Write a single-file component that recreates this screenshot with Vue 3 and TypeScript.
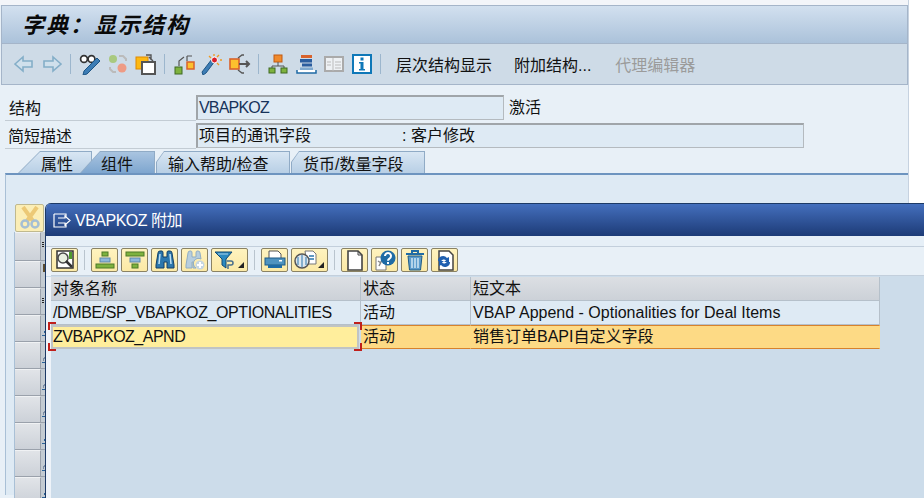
<template>
  <div class="screen">
    <div class="window">
      <div class="titlebar"><span class="title">字典：显示结构</span></div>

      <div class="toolbar">
        <span class="tool">
          <svg width="20" height="18" viewBox="0 0 20 18"><path d="M1 9 9 2v4h9v6H9v4z" fill="#cfe0ec" stroke="#84aec8" stroke-width="1.6"/></svg>
        </span>
        <span class="tool">
          <svg width="20" height="18" viewBox="0 0 20 18"><path d="M19 9 11 2v4H2v6h9v4z" fill="#cfe0ec" stroke="#84aec8" stroke-width="1.6"/></svg>
        </span>
        <i class="sep"></i>
        <span class="tool">
          <svg width="22" height="22" viewBox="0 0 22 22"><circle cx="5" cy="6" r="3.4" fill="#fff" stroke="#333" stroke-width="1.700"/><circle cx="12.500" cy="6" r="3.4" fill="#fff" stroke="#333" stroke-width="1.700"/><path d="M8 5h1.500" stroke="#333" stroke-width="1.700"/><path d="M21 8 8 21l-4 1 1-4L18 5z" fill="#3d7db5" stroke="#1d5585"/></svg>
        </span>
        <span class="tool">
          <svg width="22" height="22" viewBox="0 0 22 22"><circle cx="6" cy="6" r="4" fill="#a9c97f"/><circle cx="15" cy="15" r="4.5" fill="#ee9b85"/><path d="M12 3h4l3 3v2M9 19H6l-3-3v-2" fill="none" stroke="#bbb" stroke-width="2"/></svg>
        </span>
        <span class="tool">
          <svg width="22" height="22" viewBox="0 0 22 22"><rect x="1" y="4" width="12" height="12" fill="#fdb913" stroke="#e08a00"/><rect x="7" y="9" width="13" height="12" fill="#fff" stroke="#555" stroke-width="2"/><path d="M11 2h5v5M14 4l4 4" fill="none" stroke="#555" stroke-width="1.4"/></svg>
        </span>
        <i class="sep"></i>
        <span class="tool">
          <svg width="21" height="21" viewBox="0 0 21 21"><rect x="1" y="13" width="7" height="7" fill="#7eb23e" stroke="#3f6a23"/><rect x="13" y="8" width="7" height="7" fill="#fcc02e" stroke="#d9622b" stroke-width="1.5"/><path d="M5 12V7l5-4M13 7V2M13 2h5" fill="none" stroke="#555" stroke-width="1.2"/></svg>
        </span>
        <span class="tool">
          <svg width="22" height="22" viewBox="0 0 22 22"><path d="M14 8 5 20l-3 2-1-3L11 6z" fill="#3d7db5" stroke="#1d5585"/><circle cx="13.5" cy="7" r="3" fill="#d9202a" stroke="#fff"/><path d="M13 1v2M19 7h2M18 2l-2 2M18 12l-2-2M8 3l2 2" stroke="#f09a20" stroke-width="1.3"/></svg>
        </span>
        <span class="tool">
          <svg width="22" height="22" viewBox="0 0 22 22"><rect x="1" y="6" width="9" height="10" fill="#fcc02e" stroke="#d9622b" stroke-width="1.6"/><path d="M10 11h10M17 8l3 3-3 3" fill="none" stroke="#555" stroke-width="2"/><path d="M9 5l4-3h2M9 17l4 3h2" fill="none" stroke="#555" stroke-width="1.3"/></svg>
        </span>
        <i class="sep"></i>
        <span class="tool">
          <svg width="20" height="20" viewBox="0 0 20 20"><rect x="6" y="1" width="8" height="7" fill="#f08a2c" stroke="#c25a10"/><path d="M10 8v4M4 14v-2h12v2" fill="none" stroke="#555"/><rect x="1" y="14" width="6" height="5" fill="#7eb23e" stroke="#3f6a23"/><rect x="13" y="14" width="6" height="5" fill="#7eb23e" stroke="#3f6a23"/></svg>
        </span>
        <span class="tool">
          <svg width="21" height="20" viewBox="0 0 21 20"><rect x="5" y="1" width="11" height="3" fill="#d9622b"/><rect x="4" y="5" width="12" height="3.500" fill="#2b5d9e"/><rect x="6" y="9.500" width="10" height="3" fill="#2b5d9e"/><rect x="4" y="13.500" width="13" height="2.500" fill="#7fa9cf"/><path d="M1 16v3h19v-3" fill="#fff" stroke="#1f6ba5" stroke-width="1.5"/></svg>
        </span>
        <span class="tool">
          <svg width="20" height="16" viewBox="0 0 20 16"><rect x="1" y="1" width="18" height="14" fill="#eef1f4" stroke="#aaa" stroke-width="2"/><path d="M9 2v13M3 6h4M3 9h4M11 6h6M11 9h6M11 12h6" stroke="#bbb"/></svg>
        </span>
        <span class="tool">
          <svg width="20" height="20" viewBox="0 0 20 20"><rect x="1" y="1" width="18" height="18" fill="#fff" stroke="#0f78b8" stroke-width="2"/><rect x="8.5" y="3.5" width="3" height="3" fill="#0f78b8"/><path d="M7 8h4.5v7H13v1.500H7V15h1.500V9.500H7z" fill="#0f78b8"/></svg>
        </span>
        <i class="sep"></i>
        <span class="tool-text lead">层次结构显示</span>
        <span class="tool-text dots">附加结构...</span>
        <span class="tool-text off">代理编辑器</span>
      </div>

      <div class="form">
        <div class="form-row">
          <label class="form-label">结构</label>
          <div class="field short"><span class="code">VBAPKOZ</span></div>
          <span class="state">激活</span>
        </div>
        <div class="form-row">
          <label class="form-label tight">简短描述</label>
          <div class="field long"><span class="desc">项目的通讯字段</span><span>: 客户修改</span></div>
        </div>
      </div>

      <div class="tabs">
        <div v-for="tab in tabs" :key="tab.label" class="tab" :class="tab.kind">
          <span>{{ tab.label }}</span>
        </div>
      </div>

      <div class="panel">
        <button class="cut-btn">
          <svg width="24" height="24" viewBox="0 0 24 24"><path d="M5 1 15 15M19 1 9 15" stroke="#ecc976" stroke-width="4" fill="none"/><circle cx="7" cy="18" r="3.500" fill="none" stroke="#a5bfd3" stroke-width="2.500"/><circle cx="17" cy="18" r="3.500" fill="none" stroke="#a5bfd3" stroke-width="2.500"/></svg>
        </button>
        <div class="back-table">
          <div v-for="(kind, n) in backRows" :key="n" class="back-row">
            <span class="back-head"></span>
            <span class="back-cell" :class="kind"></span>
          </div>
        </div>
      </div>
    </div>

    <div class="dialog">
      <div class="dialog-title">
        <svg width="18" height="15" viewBox="0 0 18 15"><path d="M1 1h12v3M1 1v13h12v-3M5 5h7V3l5 4.500-5 4.500v-2H5" fill="none" stroke="#fff" stroke-width="1.200"/></svg>
        <span class="dialog-name">VBAPKOZ 附加</span>
      </div>
      <div class="dialog-gap"></div>
      <div class="dialog-tools">
        <button class="btn">
          <svg width="20" height="20" viewBox="0 0 20 20"><rect x="2" y="1" width="16" height="17" fill="#fff" stroke="#333" stroke-width="1.500"/><circle cx="8" cy="8" r="5" fill="#e8efe0" stroke="#4a4a4a" stroke-width="1.500"/><path d="M14 2h3v7h-3z" fill="#4f9a2e"/><path d="M11 11l6 6" stroke="#333" stroke-width="2.500"/></svg>
        </button>
        <i class="dsep"></i>
        <button class="btn"><svg width="20" height="19" viewBox="0 0 20 19"><rect x="7" y="1" width="6" height="4" fill="#7eb23e" stroke="#4d7a28"/><rect x="5" y="7" width="10" height="4" fill="#8db7dc" stroke="#5d87ab"/><rect x="1" y="13" width="18" height="4" fill="#7eb23e" stroke="#4d7a28"/></svg></button>
        <button class="btn"><svg width="20" height="19" viewBox="0 0 20 19"><rect x="1" y="1" width="18" height="4" fill="#7eb23e" stroke="#4d7a28"/><rect x="5" y="7" width="10" height="4" fill="#8db7dc" stroke="#5d87ab"/><rect x="7" y="13" width="6" height="4" fill="#7eb23e" stroke="#4d7a28"/></svg></button>
        <button class="btn"><svg width="20" height="20" viewBox="0 0 20 20"><path d="M3 3q0-2 2-2h2q1 0 1 2v4h4V3q0-2 1-2h2q2 0 2 2l2 12v3h-7v-6H9v6H1v-3z" fill="#2c77ad" stroke="#123f66"/><path d="M5 4 4 14M15 4l1 10" stroke="#bfe0f2" stroke-width="1.500"/></svg></button>
        <button class="btn"><svg width="20" height="20" viewBox="0 0 20 20"><path d="M3 3q0-2 2-2h1q1 0 1 2v4h4V3q0-2 1-2h1q2 0 2 2l1 6a5 5 0 0 0-5 9H8v-6H7v6H1v-3z" fill="#b7cede" stroke="#90aec4"/><circle cx="15" cy="15" r="4.500" fill="#c5d6e2"/><path d="M15 12v6M12 15h6" stroke="#fff" stroke-width="2"/></svg></button>
        <button class="btn wide"><svg width="20" height="20" viewBox="0 0 20 20"><path d="M1 2h17l-6 7v9l-4-3V9z" fill="#2c8ac0" stroke="#134a75"/><path d="M4 4h10" stroke="#a9d2ea"/><path d="M13 11h4a2 2 0 0 1 0 4h-3v4" fill="none" stroke="#4a6f8c" stroke-width="1.500"/></svg><i class="drop"></i></button>
        <i class="dsep"></i>
        <button class="btn"><svg width="22" height="20" viewBox="0 0 22 20"><path d="M5 1h9l3 3v5H5z" fill="#fff" stroke="#555"/><rect x="1" y="8" width="20" height="7" fill="#4f93c0" stroke="#1f5b85"/><rect x="4" y="15" width="14" height="3" fill="#1f6ba5"/><rect x="15" y="10" width="3" height="1.500" fill="#fff"/></svg></button>
        <button class="btn wide"><svg width="24" height="20" viewBox="0 0 24 20"><path d="M11 1h8l3 3v10h-9z" fill="#fff" stroke="#777"/><path d="M15 6h5M15 9h5" stroke="#2c77ad" stroke-width="1.500"/><circle cx="8" cy="11" r="7" fill="#dfe8ee" stroke="#555" stroke-width="1.500"/><path d="M8 5v12M4 7v8M12 7v8" stroke="#2c77ad"/></svg><i class="drop"></i></button>
        <i class="dsep"></i>
        <button class="btn"><svg width="18" height="21" viewBox="0 0 18 21"><path d="M2 1h10l4 4v15H2z" fill="#fff" stroke="#444" stroke-width="1.600"/><path d="M12 1v4h4" fill="none" stroke="#444"/></svg></button>
        <button class="btn"><svg width="22" height="21" viewBox="0 0 22 21"><path d="M2 7h7l3 3v10H2z" fill="#fff" stroke="#777"/><path d="M4 11l3 2M8 10l-3 6" stroke="#888" stroke-width="1.500"/><circle cx="14" cy="8" r="7.500" fill="#1f6ba5"/><path d="M11 6a3 3 0 1 1 4.500 2.600c-1 .6-1.500 1-1.500 2.200" fill="none" stroke="#fff" stroke-width="2"/><rect x="13" y="12" width="2" height="2" fill="#fff"/></svg></button>
        <button class="btn"><svg width="20" height="21" viewBox="0 0 20 21"><path d="M1 4h18M7 3V1h6v2" fill="none" stroke="#1f6ba5" stroke-width="2"/><path d="M3 6h14l-1.500 14h-11z" fill="#5c9ccc" stroke="#1f5b85"/><path d="M7 8v10M10 8v10M13 8v10" stroke="#d8ecf7" stroke-width="1.400"/></svg></button>
        <button class="btn"><svg width="20" height="21" viewBox="0 0 20 21"><path d="M4 1h10l4 4v15H4z" fill="#fff" stroke="#444" stroke-width="1.500"/><path d="M3 11a5 5 0 0 1 9-3l2-1v5h-5l2-1.500a3 3 0 0 0-5 1zM15 12a5 5 0 0 1-9 3l-2 1v-5h5l-2 1.500a3 3 0 0 0 5-1z" fill="#1f5fb0"/></svg></button>
      </div>
      <div class="grid">
        <div class="grid-row head">
          <span class="c1">对象名称</span><span class="c2">状态</span><span class="c3">短文本</span>
        </div>
        <div class="grid-row">
          <span class="c1 latin">/DMBE/SP_VBAPKOZ_OPTIONALITIES</span><span class="c2">活动</span><span class="c3">VBAP Append - Optionalities for Deal Items</span>
        </div>
        <div class="grid-row picked">
          <span class="c1 current">ZVBAPKOZ_APND<i class="mark tl"></i><i class="mark tr"></i><i class="mark bl"></i><i class="mark br"></i></span><span class="c2">活动</span><span class="c3">销售订单BAPI自定义字段</span>
        </div>
      </div>
    </div>
  </div>
</template>

<script setup lang="ts">
interface Tab {
  label: string
  kind: string
}

const tabs: Tab[] = [
  { label: "属性", kind: "first" },
  { label: "组件", kind: "active" },
  { label: "输入帮助/检查", kind: "rest" },
  { label: "货币/数量字段", kind: "rest" },
]

// what shows of the covered column, left of the dialog
const backRows: string[] = ["dots", "bar", "dots", "dot", "slant", "slant", "slant", "dot", "slant", "dot"]
</script>

<style>
html,
body {
  margin: 0;
  background: #fff;
}
</style>

<style scoped>
.screen {
  position: relative;
  width: 924px;
  height: 498px;
  overflow: hidden;
  background: #fff;
  font-family: "Liberation Sans", "Noto Sans CJK SC", sans-serif;
  font-size: 16px;
  color: #111;
}

.window {
  width: 909px;
  height: 498px;
  padding-top: 5px;
  box-sizing: border-box;
  background: linear-gradient(#f3f5f9 5px, #e8f0f7 5px);
  border-right: 1px solid #c6d2e0;
}

.titlebar {
  height: 37px;
  margin-left: 1px;
  border: 1px solid #a5b5c9;
  background: linear-gradient(#d2e0ef, #abc2da);
  display: flex;
  align-items: center;
  padding-left: 20px;
}

.title {
  margin-top: -3px;
  font-size: 22px;
  font-style: italic;
  font-weight: 700;
  letter-spacing: 2px;
  color: #0a0a0a;
}

.toolbar {
  height: 40px;
  margin-left: 1px;
  padding-left: 8px;
  border: 1px solid #a5b5c9;
  border-top: 0;
  background: #cedbe7;
  display: flex;
  align-items: center;
}

.tool {
  width: 28px;
  height: 24px;
  display: flex;
  align-items: center;
  justify-content: center;
}

.sep {
  width: 1px;
  height: 20px;
  margin: 0 5px 0 4px;
  background: #9cb6cd;
}

.tool-text {
  margin-right: 22px;
}

.tool-text.lead {
  margin-left: 10px;
}

.tool-text.dots {
  margin-right: 24px;
}

.tool-text.off {
  color: #9b9b9b;
}

.form {
  padding: 10px 0 0 5px;
}

.form-row {
  display: flex;
  height: 26px;
  margin-bottom: 2px;
}

.form-label {
  width: 191px;
  box-sizing: border-box;
  padding-left: 4px;
  padding-top: 1px;
  line-height: 25px;
  height: 26px;
  border-bottom: 1px solid #c3ccd4;
}

.form-label.tight {
  padding-left: 3px;
}

.field {
  box-sizing: border-box;
  height: 25px;
  padding-left: 1px;
  line-height: 22px;
  background: #deeaf4;
  border: 1px solid #b4babf;
  border-top: 2px solid #a0a5a9;
  border-left: 2px solid #a0a5a9;
  display: flex;
}

.field.short {
  width: 308px;
}

.field.long {
  width: 608px;
}

.code {
  color: #16325a;
  letter-spacing: -0.8px;
}

.desc {
  width: 203px;
}

.state {
  margin-left: 5px;
  line-height: 25px;
}

.tabs {
  display: flex;
  height: 22px;
  margin-top: 2px;
  padding-left: 18px;
}

.tab {
  position: relative;
  height: 22px;
  box-sizing: border-box;
  padding-top: 2px;
  display: flex;
  align-items: center;
  clip-path: polygon(22px 0, 100% 0, 100% 100%, 0 100%);
  background: #90abc6;
}

.tab::before {
  content: "";
  position: absolute;
  inset: 1px 1px 0 1px;
  clip-path: polygon(21px 0, 100% 0, 100% 100%, 0 100%);
  background: linear-gradient(#d8e6f3, #b8cfe5);
}

.tab span {
  position: relative;
  white-space: nowrap;
}

.tab.first {
  width: 74px;
  padding-left: 23px;
}

.tab.active {
  width: 75px;
  margin-left: -12px;
  padding-left: 21px;
  clip-path: polygon(20px 0, 100% 0, 100% 100%, 0 100%);
}

.tab.active::before {
  clip-path: polygon(19px 0, 100% 0, 100% 100%, 0 100%);
  background: linear-gradient(#a9c4e0, #7ea6cf);
}

.tab.rest {
  width: 134px;
  margin-left: 1px;
  padding-left: 12px;
  clip-path: polygon(8px 0, 100% 0, 100% 100%, 0 100%, 0 11px);
}

.tab.rest::before {
  clip-path: polygon(7px 0, 100% 0, 100% 100%, 0 100%, 0 10px);
}

.panel {
  margin-left: 5px;
  height: 322px;
  box-sizing: border-box;
  border-top: 2px solid #6d94bf;
  border-left: 1px solid #a9c0d6;
  background: #deeaf4;
  padding: 29px 0 0 8px;
}

.cut-btn {
  display: flex;
  align-items: center;
  justify-content: center;
  width: 29px;
  height: 28px;
  margin-left: 1px;
  padding: 0;
  background: #fbeeb6;
  border: 1px solid #c0b98e;
  border-radius: 2px;
}

.back-table {
  width: 32px;
  background: #c9ced5;
  border-left: 1px solid #a9c0d6;
  padding-left: 0;
}

.back-row {
  display: flex;
  height: 27px;
  box-sizing: border-box;
  border-bottom: 1px solid #9aa1ab;
}

.back-row:first-child {
  height: 29px;
}

.back-head {
  width: 25px;
  background: linear-gradient(#e1e4e8, #ccd1d8);
  border-right: 1px solid #9aa1ab;
  border-top: 1px solid #f0f2f4;
}

.back-cell {
  position: relative;
  flex: 1;
  background: #c3cbd2;
}

.back-cell.slant::before {
  content: "";
  position: absolute;
  left: 2px;
  bottom: 7px;
  width: 4px;
  height: 7px;
  background: linear-gradient(to top left, transparent 44%, #7c8da3 44%, #7c8da3 62%, transparent 62%);
}

.back-cell.slant::after,
.back-cell.dot::after {
  content: "";
  position: absolute;
  left: 1px;
  bottom: 5px;
  width: 5px;
  height: 1px;
  background: #2a6298;
}

.back-cell.dot::before {
  content: "";
  position: absolute;
  left: 3px;
  bottom: 8px;
  width: 2px;
  height: 2px;
  background: #2a6298;
}

.back-cell.dots::before {
  content: "";
  position: absolute;
  left: 1px;
  top: 10px;
  width: 2px;
  height: 5px;
  background: repeating-linear-gradient(#222 0 1px, transparent 1px 2px);
}

.back-cell.bar::before {
  content: "";
  position: absolute;
  left: 2px;
  top: 3px;
  width: 2px;
  height: 8px;
  background: #5a4a2e;
}

.dialog {
  position: absolute;
  left: 45px;
  top: 203px;
  width: 890px;
  height: 300px;
  border-left: 1px solid #1d3a66;
  border-radius: 6px 0 0 0;
  overflow: hidden;
  background: #ccdcea;
}

.dialog-title {
  height: 32px;
  border-top: 1px solid #1d3a66;
  background: linear-gradient(#446fbd, #1d3b77);
  color: #fff;
  display: flex;
  align-items: center;
  gap: 4px;
  padding-left: 7px;
}

.dialog-name {
  margin-top: -2px;
  letter-spacing: -0.5px;
}

.dialog-gap {
  height: 10px;
  background: #e6eff7;
  border-bottom: 1px solid #c3cfdc;
}

.dialog-tools {
  height: 27px;
  margin-left: 5px;
  padding-top: 1px;
  background: #e8f0f7;
  border-bottom: 1px solid #c3cfdc;
  display: flex;
  align-items: flex-start;
  gap: 3px;
  box-shadow: -5px 0 0 #eef3f9;
}

.btn {
  position: relative;
  width: 27px;
  height: 24px;
  padding: 0;
  display: flex;
  align-items: center;
  justify-content: center;
  background: linear-gradient(#fff3bf, #fbe9a6);
  border: 1px solid #8a8264;
  border-radius: 2px;
}

.btn.wide {
  width: 37px;
  justify-content: flex-start;
  padding-left: 2px;
}

.drop {
  position: absolute;
  right: 3px;
  bottom: 3px;
  border-left: 6px solid transparent;
  border-bottom: 6px solid #222;
}

.dsep {
  width: 1px;
  height: 20px;
  margin: 2px 3px 0;
  background: #b9c4ce;
}

.grid {
  margin-left: 5px;
  margin-top: 1px;
  position: relative;
  height: 240px;
  box-shadow: -5px 0 0 #eef3f9;
}

.grid-row {
  display: flex;
  height: 24px;
  box-sizing: border-box;
  width: 829px;
  line-height: 24px;
}

.grid-row span {
  box-sizing: border-box;
  padding-left: 2px;
  white-space: nowrap;
  background: #deeaf4;
  border-right: 1px solid #b5c0ca;
  border-bottom: 1px solid #b5c0ca;
}

.grid-row.head span {
  background: linear-gradient(#dcdfe3, #ccd1d8);
}

.grid-row.picked span {
  background: #fdda85;
  border-top: 1px solid #d7822c;
  border-bottom: 1px solid #d7822c;
  border-right-color: #fdda85;
  line-height: 22px;
}

.c1 {
  width: 310px;
}

.c2 {
  width: 110px;
}

.c3 {
  width: 409px;
}

.latin {
  letter-spacing: -0.4px;
}

.grid-row.picked .current {
  position: relative;
  background: #ffee9c;
  border: 2px solid #c0c4c4;
  padding-left: 0;
  width: 308px;
  margin-right: 2px;
  letter-spacing: -0.5px;
  line-height: 20px;
}

.mark {
  position: absolute;
  width: 6px;
  height: 6px;
  border: 0 solid #c0201c;
}

.mark.tl {
  left: -5px;
  top: -5px;
  border-width: 2px 0 0 2px;
}

.mark.tr {
  right: -5px;
  top: -5px;
  border-width: 2px 2px 0 0;
}

.mark.bl {
  left: -5px;
  bottom: -4px;
  border-width: 0 0 2px 2px;
}

.mark.br {
  right: -5px;
  bottom: -4px;
  border-width: 0 2px 2px 0;
}
</style>
